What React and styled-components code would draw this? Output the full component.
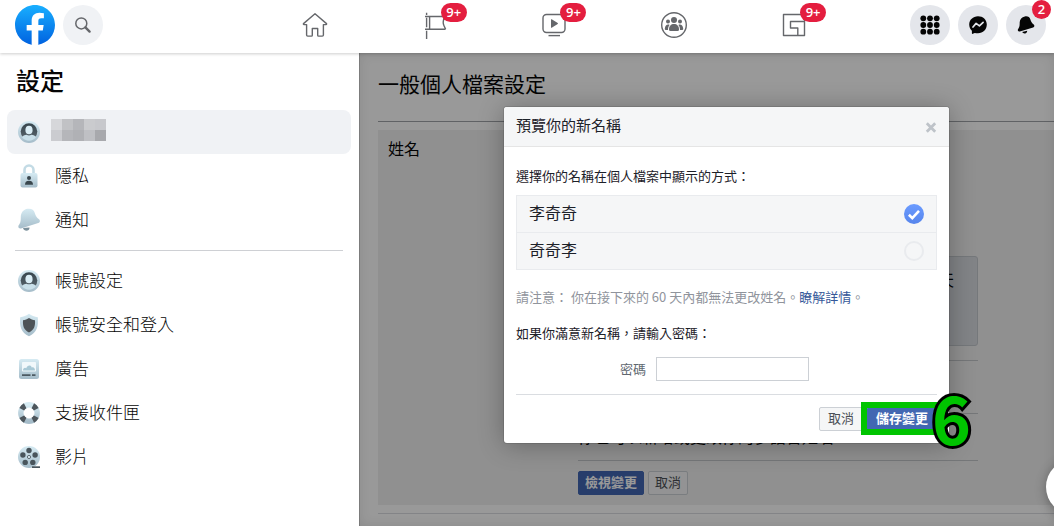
import React from 'react';
import styled, { createGlobalStyle, css } from 'styled-components';

const GlobalStyle = createGlobalStyle`
  *, *::before, *::after { box-sizing: border-box; }
  body {
    margin: 0;
    overflow-x: hidden;
    background: #fff;
    color: #050505;
    font-family: "Noto Sans CJK TC", "Noto Sans", sans-serif;
  }
  h1, h2, h3, p { margin: 0; padding: 0; font-weight: 400; }
  button, input { font-family: inherit; }
  svg { display: block; }
`;

const Page = styled.div`
  position: relative;
  display: flex;
  flex-direction: column;
  min-height: 100vh;
  overflow: hidden;
`;

/* ---------- top bar ---------- */

const TopBar = styled.header`
  position: relative;
  z-index: 3;
  display: flex;
  height: 53px;
  padding: 5px 8px 8px 15px;
  background: #fff;
  box-shadow: 0 1px 3px rgba(0, 0, 0, 0.2);
`;

const BarStart = styled.div`
  display: flex;
  gap: 8px;
  width: 240px;
`;

const BarEnd = styled.div`
  display: flex;
  justify-content: flex-end;
  gap: 8px;
  width: 192px;
`;

const Tabs = styled.nav`
  display: grid;
  grid-template-columns: repeat(5, 1fr);
  flex: 1;
`;

const TabLink = styled.a`
  display: flex;
  align-items: center;
  justify-content: center;
  color: #65676b;
`;

const IconSlot = styled.span`
  position: relative;
  display: block;
`;

const RoundButton = styled.button`
  position: relative;
  display: flex;
  align-items: center;
  justify-content: center;
  width: 40px;
  height: 40px;
  padding: 0;
  border: 0;
  border-radius: 50%;
  background: ${(p) => (p.$soft ? '#f0f2f5' : '#e4e6eb')};
  color: ${(p) => (p.$soft ? '#65676b' : '#050505')};
`;

const Badge = styled.span`
  position: absolute;
  top: -8px;
  left: 20px;
  min-width: 26px;
  height: 19px;
  padding: 0 5px;
  border-radius: 10px;
  background: #e41e3f;
  color: #fff;
  font: 600 13px/19px "Open Sans", "Noto Sans", sans-serif;
  text-align: center;
  ${(p) => p.$corner && css`
    top: -5px;
    left: 26px;
    min-width: 19px;
  `}
`;

/* ---------- side menu ---------- */

const Columns = styled.div`
  display: flex;
  flex: 1;
`;

const SideMenu = styled.aside`
  flex: none;
  width: 359px;
  padding: 9px 8px 0 7px;
`;

const MenuTitle = styled.h1`
  padding: 0 9px;
  margin-bottom: 12px;
  font-size: 24px;
  font-weight: 500;
  line-height: 36px;
`;

const MenuLink = styled.a`
  display: flex;
  align-items: center;
  gap: 11px;
  height: 44px;
  padding: 0 11px;
  border-radius: 8px;
  background: ${(p) => (p.$active ? '#f0f2f5' : 'transparent')};
  color: #050505;
  font-size: 17px;
  font-weight: 300;
  line-height: 24px;
  text-decoration: none;
`;

const MenuText = styled.span`
  padding: 0 0 2px 4px;
`;

const MenuRule = styled.hr`
  height: 1px;
  margin: 8px;
  border: 0;
  background: #ced0d4;
`;

const Mosaic = styled.span`
  display: grid;
  grid-template-columns: repeat(5, 11px);
  grid-auto-rows: 11px;
  margin-bottom: 4px;
`;

const MosaicCell = styled.i`
  background: ${(p) => p.$tone};
`;

/* ---------- settings page ---------- */

const Main = styled.main`
  position: relative;
  flex: 1;
  min-width: 0;
  padding: 15px 0 12px 19px;
`;

const SectionTitle = styled.h2`
  padding-bottom: 23px;
  margin-bottom: 8px;
  border-bottom: 1px solid #a0a3a8;
  font-size: 21px;
  line-height: 30px;
`;

const SettingRow = styled.section`
  display: flex;
  padding: 10px 0 10px 10px;
  background: #f0f0f0;
`;

const RowLabel = styled.h3`
  width: 190px;
  font-size: 16px;
  line-height: 16px;
`;

const RowContent = styled.div`
  flex: 0 1 400px;
  font-size: 16px;
`;

const RowEnd = styled.hr`
  height: 1px;
  margin: 8px 0 0;
  border: 0;
  background: #dadde1;
`;

const NameFields = styled.div`
  display: grid;
  justify-items: start;
  gap: 12px;
  margin-bottom: 20px;
`;

const TextInput = styled.input`
  width: 153px;
  height: 24px;
  padding: 0 4px;
  border: 1px solid #ccd0d5;
  background: #fff;
`;

const Notice = styled.p`
  min-height: 90px;
  padding: 11px 23px;
  margin-bottom: 14px;
  border: 1px solid #c4c8ce;
  border-radius: 3px;
  background: #d9dce1;
  line-height: 22px;
  text-align: right;
`;

const RowPart = styled.div`
  min-height: ${(p) => (p.$tall ? 53 : 47)}px;
  padding: 12px 0;
  border-top: 1px solid #c4c6ca;
  line-height: 20px;
`;

const RowActions = styled.div`
  display: flex;
  gap: 4px;
  padding-top: 10px;
  border-top: 1px solid #c4c6ca;
`;

const Button = styled.button`
  height: 24px;
  padding: 0 ${(p) => (p.$roomy ? 8 : 6)}px 2px;
  border: 1px solid ${(p) => (p.$primary ? '#4267b2' : '#ccd0d5')};
  border-radius: 2px;
  background: ${(p) => (p.$primary ? '#4267b2' : '#f5f6f7')};
  color: ${(p) => (p.$primary ? '#fff' : '#4b4f56')};
  font-size: 13px;
  font-weight: ${(p) => (p.$primary ? 700 : 400)};
  line-height: 20px;
  white-space: nowrap;
`;

/* ---------- dialog ---------- */

const Shade = styled.div`
  position: absolute;
  inset: 0;
  display: flex;
  align-items: flex-start;
  justify-content: center;
  padding: 54px 0 0 40px;
  background: rgba(0, 0, 0, 0.4);
  box-shadow: inset 1px 0 0 rgba(0, 0, 0, 0.15), inset 0 0 12px rgba(0, 0, 0, 0.1);
`;

const Dialog = styled.div`
  width: 445px;
  max-width: 100%;
  border-radius: 3px;
  background: #fff;
  box-shadow: 0 2px 26px rgba(0, 0, 0, 0.3), 0 0 0 1px rgba(0, 0, 0, 0.1);
  color: #1d2129;
  font-size: 13px;
  line-height: 20px;
`;

const DialogHead = styled.div`
  display: flex;
  align-items: center;
  justify-content: space-between;
  height: 40px;
  padding: 0 12px;
  border-bottom: 1px solid #e5e5e5;
  border-radius: 3px 3px 0 0;
  background: #f5f6f7;
`;

const DialogTitle = styled.h2`
  padding-bottom: 3px;
  font-size: 15px;
`;

const CloseButton = styled.button`
  padding: 0;
  border: 0;
  background: none;
  color: #bec3c9;
`;

const DialogBody = styled.div`
  padding: 19px 12px 13px;
`;

const Choices = styled.div`
  margin: 9px 0 17px;
  border: 1px solid #e9ebee;
  background: #f5f6f7;
`;

const Choice = styled.label`
  display: flex;
  align-items: center;
  justify-content: space-between;
  height: 36px;
  padding: 0 12px;
  font-size: 16px;
  & + & {
    height: 37px;
    border-top: 1px solid #e9ebee;
  }
`;

const ChoiceName = styled.span`
  padding-bottom: 4px;
`;

const RadioBox = styled.span`
  display: grid;
  & > * { grid-area: 1 / 1; }
`;

const Radio = styled.input`
  appearance: none;
  width: 20px;
  height: 20px;
  margin: 0;
  border: 2px solid #e9ebee;
  border-radius: 50%;
  &:checked {
    border: 0;
    background: linear-gradient(#6b9bff, #5685ec);
  }
  & + svg { visibility: hidden; }
  &:checked + svg { visibility: visible; }
`;

const Note = styled.p`
  margin-bottom: 16px;
  color: #90949c;
  a {
    color: #365899;
    text-decoration: none;
  }
`;

const PasswordRow = styled.div`
  display: flex;
  align-items: center;
  margin-top: 14px;
  label {
    width: 130px;
    margin-right: 10px;
    color: #606770;
    text-align: right;
  }
`;

const DialogFoot = styled.div`
  display: flex;
  justify-content: flex-end;
  gap: 4px;
  padding: 12px 0;
  margin: 0 12px;
  border-top: 1px solid #dadde1;
`;

const Marked = styled.div`
  position: relative;
`;

const MarkFrame = styled.span`
  position: absolute;
  inset: -5px -6px -4px;
  border: 6px solid #00c400;
  pointer-events: none;
`;

const MarkNumber = styled.span`
  position: absolute;
  top: -19px;
  left: 65px;
  color: #00c400;
  font-size: 66px;
  font-weight: 700;
  line-height: 56px;
  -webkit-text-stroke: 6px #000;
  paint-order: stroke fill;
  pointer-events: none;
`;

const ChatButton = styled.button`
  position: absolute;
  z-index: 4;
  bottom: 11px;
  right: -48px;
  width: 56px;
  height: 56px;
  border: 0;
  border-radius: 50%;
  background: #fff;
  box-shadow: 0 2px 12px rgba(0, 0, 0, 0.3);
`;

/* ---------- icons ---------- */

const line = { fill: 'none', stroke: 'currentColor', strokeWidth: 1.4, strokeLinejoin: 'round' };

const LogoIcon = () => (
  <svg width="40" height="40" viewBox="0 0 36 36">
    <defs>
      <linearGradient id="logo" x1="0" y1="0" x2="0" y2="1">
        <stop offset="0" stopColor="#19afff" />
        <stop offset="1" stopColor="#0062e0" />
      </linearGradient>
    </defs>
    <path fill="url(#logo)" d="M15 35.8C6.5 34.3 0 26.9 0 18 0 8.1 8.1 0 18 0s18 8.1 18 18c0 8.9-6.5 16.3-15 17.8l-1-.8h-4l-1 .8z" />
    <path fill="#fff" d="M25 23l.8-5H21v-3.5c0-1.4.5-2.5 2.7-2.5H26V7.4c-1.3-.2-2.7-.4-4-.4-4.1 0-7 2.5-7 7v4h-4.5v5H15v12.7c1 .2 2 .3 3 .3s2-.1 3-.3V23h4z" />
  </svg>
);

const SearchIcon = () => (
  <svg width="20" height="20" viewBox="0 0 20 20" fill="none" stroke="currentColor">
    <circle cx="8.3" cy="8.4" r="5.5" strokeWidth="1.5" />
    <path d="M12.4 12.4l4.2 4.2" strokeWidth="2.4" strokeLinecap="round" />
  </svg>
);

const HomeIcon = () => (
  <svg width="28" height="28" viewBox="0 0 28 28" {...line}>
    <path d="M14 2.8 2.5 12.6q-.4.9.5 1H5.6V24q0 1.1 1.1 1.1h3.7q.9 0 .9-.9v-6.7h5.4v6.7q0 .9.9.9h3.7q1.1 0 1.1-1.1V13.6H25q.9-.1.5-1z" />
  </svg>
);

const FlagIcon = () => (
  <svg width="28" height="28" viewBox="0 0 28 28" {...line}>
    <path d="M5.6 1.8v2.2M5.6 6.8v9.4M5.6 19.8V28M4 5.5h20.6M4 18.3h20.6M8.6 5.5v12.8M23.5 5.5c-1.3 3.5-1.9 6.5-.6 9 .5 1.1 1.1 2.2 1.7 3.8" />
  </svg>
);

const WatchIcon = () => (
  <svg width="28" height="28" viewBox="0 0 28 28" {...line}>
    <rect x="3" y="3.5" width="22" height="18" rx="3.5" />
    <path d="M8.5 24.6h11.5" />
    <path fill="currentColor" stroke="none" d="M11 8.7v7.6q0 .8.7.4l6-3.7q.6-.5 0-1l-6-3.7q-.7-.4-.7.4z" />
  </svg>
);

const GroupsIcon = () => (
  <svg width="28" height="28" viewBox="0 0 28 28" {...line}>
    <circle cx="14" cy="14" r="12.3" />
    <g fill="currentColor" stroke="none">
      <circle cx="14" cy="8.9" r="3" />
      <circle cx="8" cy="10.6" r="2" />
      <circle cx="20" cy="10.6" r="2" />
      <path d="M9 18.5c0-3.6 2-5.5 5-5.500s5 1.900 5 5.500q0 1.500-1.500 1.500h-7Q9 20 9 18.500z" />
      <path d="M8 19H6q-1.500 0-1.200-1.500c.4-2.600 1.500-4 3.400-4 .6 0 1 .1 1.400.4C8.400 15.300 8 17 8 19zM20 19h2q1.500 0 1.200-1.500c-.4-2.600-1.500-4-3.400-4-.6 0-1 .1-1.400.4C19.600 15.300 20 17 20 19z" />
    </g>
  </svg>
);

const GamingIcon = () => (
  <svg width="28" height="28" viewBox="0 0 28 28" {...line}>
    <path d="M3.5 3.5h21v21h-21zM24.5 10.5h-14v6.5h7.3v7.5" />
  </svg>
);

const AppsIcon = () => (
  <svg width="20" height="20" viewBox="0 0 20 20" fill="currentColor">
    {[3.3, 10, 16.7].map((y) => [3.3, 10, 16.7].map((x) => <circle key={`${x}-${y}`} cx={x} cy={y} r="2.9" />))}
  </svg>
);

const MessengerIcon = () => (
  <svg width="20" height="20" viewBox="0 0 20 20">
    <path fill="currentColor" d="M10 1.2c-5 0-8.800 3.600-8.800 8.300 0 2.600 1 4.700 2.700 6.200v2.600q.1.900.9.500l2-.9c1 .3 2.100.4 3.200.4 5 0 8.800-3.900 8.800-8.800S15 1.200 10 1.200z" />
    <path fill="none" stroke="#e4e6eb" strokeWidth="1.7" strokeLinejoin="round" strokeLinecap="round" d="M5 12l3.1-3.6 3.300 2.500 3.700-3.500" />
  </svg>
);

const bellShape = 'M2.8 8.500C3 4.500 5.500 1.500 9.500.8c3.700-.6 6.300.7 7.200 4 .8 3 2 4.700 4.300 6.500 1.500 1.200 1 3.300-.8 3.800L3 20.500C.4 21-.5 18.300 1.200 16.500c1.800-2.100 1.500-5 1.600-8z';

const BellIcon = () => (
  <svg width="20" height="20" viewBox="-2 -1 26 26" fill="currentColor">
    <path d={bellShape} />
    <path d="M6 21.200l6.500-1.800c.1 1.900-1 3.300-2.800 3.500-1.600.2-2.900-.4-3.700-1.700z" />
  </svg>
);

const Gradients = ({ id }) => (
  <defs>
    <linearGradient id={`${id}-l`} x1="0" y1="0" x2="0" y2="1">
      <stop offset="0" stopColor="#d6ebf3" />
      <stop offset="1" stopColor="#a5bcc9" />
    </linearGradient>
    <linearGradient id={`${id}-d`} x1="0" y1="0" x2="0" y2="1">
      <stop offset="0" stopColor="#36454d" />
      <stop offset="1" stopColor="#5a666e" />
    </linearGradient>
  </defs>
);

const MenuSvg = ({ id, children }) => (
  <svg width="22" height="24" viewBox="0 0 22 24">
    <Gradients id={id} />
    {children}
  </svg>
);

const PersonIcon = ({ id }) => (
  <MenuSvg id={id}>
    <circle cx="11" cy="12" r="11" fill={`url(#${id}-l)`} />
    <circle cx="11" cy="11.5" r="8.3" fill={`url(#${id}-d)`} />
    <path fill="#c9e0ea" d="M4 17.300c.6-1.800 2.600-2.300 4.600-2.600 1.500.9 3.300.9 4.800 0 2 .3 4 .8 4.600 2.600-3.500 4.500-10.500 4.500-14 0z" />
    <ellipse cx="11" cy="10" rx="3.6" ry="4.3" fill="#d9edf5" />
  </MenuSvg>
);

const LockIcon = ({ id }) => (
  <MenuSvg id={id}>
    <path fill="none" stroke="#c3dbe5" strokeWidth="2.6" d="M6.500 11V6a4.500 4.500 0 0 1 9 0v5" />
    <rect x="2.5" y="9" width="17" height="14.5" rx="2" fill={`url(#${id}-l)`} />
    <circle cx="11" cy="14" r="2" fill="#39464d" />
    <path fill="#39464d" d="M7 20.800c0-2.900 1.200-4 4-4s4 1.100 4 4z" />
  </MenuSvg>
);

const NoticeBellIcon = ({ id }) => (
  <MenuSvg id={id}>
    <path fill="#7c919c" d="M5 20l6.500-.6c.3 4-5.500 4.600-6.500.6z" />
    <path fill={`url(#${id}-l)`} d={bellShape} />
  </MenuSvg>
);

const ShieldIcon = ({ id }) => (
  <MenuSvg id={id}>
    <path fill={`url(#${id}-l)`} d="M11 .8c2.500 2 5.500 3 8.800 3.400.8 9-.8 15.300-8.800 19C3 19.500 1.400 13.200 2.200 4.200 5.500 3.800 8.500 2.800 11 .8z" />
    <path fill="#4d5357" d="M11 5c1.800 1.300 3.800 2 6 2.300.4 6-.9 9.700-6 12.200-5.100-2.500-6.400-6.200-6-12.200C7.200 7 9.200 6.300 11 5z" />
  </MenuSvg>
);

const AdsIcon = ({ id }) => (
  <MenuSvg id={id}>
    <rect x="1" y="2" width="20" height="20" rx="2.5" fill={`url(#${id}-l)`} />
    <rect x="4" y="5" width="14" height="9.5" rx=".8" fill="#f1f8fb" />
    <path fill="#a9c9d6" d="M5 13.500c0-2.500 2-3.500 3.300-2.200C9 8 13 7.400 13.700 10.400c2-.9 3.300.9 3.300 3.100z" />
    <path fill="#4c5a62" d="M4 17.200h8.500v1.800H4zM14 17.200h3.500v1.800H14z" />
  </MenuSvg>
);

const SupportIcon = ({ id }) => (
  <MenuSvg id={id}>
    <circle cx="11" cy="12" r="8.2" fill="none" stroke={`url(#${id}-l)`} strokeWidth="5.4" />
    <circle cx="11" cy="12" r="8.2" fill="none" stroke="#4d565c" strokeWidth="5.4" pathLength="360" strokeDasharray="34 56" strokeDashoffset="-28" />
  </MenuSvg>
);

const ReelIcon = ({ id }) => (
  <MenuSvg id={id}>
    <circle cx="11" cy="12" r="11" fill={`url(#${id}-l)`} />
    <g fill="#49555c">
      <circle cx="11" cy="5.5" r="2.7" />
      <circle cx="4.9" cy="10" r="2.7" />
      <circle cx="17.1" cy="10" r="2.7" />
      <circle cx="7.2" cy="17.4" r="2.7" />
      <circle cx="14.8" cy="17.4" r="2.7" />
      <path d="M14 21.300h8v1.700h-8z" />
    </g>
    <circle cx="11" cy="12" r="1.6" fill="#dcecf3" stroke="#5f6c74" />
  </MenuSvg>
);

const CheckIcon = () => (
  <svg width="20" height="20" viewBox="0 0 20 20" fill="none" stroke="#fff" strokeWidth="2.6">
    <path d="M4.9 10.8l3.4 3.3 6.7-7.3" />
  </svg>
);

const CloseIcon = () => (
  <svg width="12" height="12" viewBox="0 0 12 12" fill="none" stroke="currentColor" strokeWidth="2.8">
    <path d="M1.8 2.3l8.4 8.4M10.2 2.3l-8.4 8.4" />
  </svg>
);

/* ---------- data ---------- */

const tabs = [
  { label: '首頁', Icon: HomeIcon },
  { label: '粉絲專頁', Icon: FlagIcon, badge: '9+' },
  { label: 'Watch', Icon: WatchIcon, badge: '9+' },
  { label: '社團', Icon: GroupsIcon },
  { label: '遊戲', Icon: GamingIcon, badge: '9+' },
];

const privacyLinks = [
  { label: '隱私', Icon: LockIcon },
  { label: '通知', Icon: NoticeBellIcon },
];

const accountLinks = [
  { label: '帳號設定', Icon: PersonIcon },
  { label: '帳號安全和登入', Icon: ShieldIcon },
  { label: '廣告', Icon: AdsIcon },
  { label: '支援收件匣', Icon: SupportIcon },
  { label: '影片', Icon: ReelIcon },
];

const mosaicTones = [
  '#d6d7da', '#c1c2c5', '#b5b6ba', '#cacbce', '#c7c8cc',
  '#cbccd0', '#b5b6ba', '#b0b1b5', '#bfc0c4', '#a8a9ad',
];

const MenuList = ({ items, prefix }) =>
  items.map(({ label, Icon }, i) => (
    <MenuLink href="#" key={label}>
      <Icon id={`${prefix}${i}`} />
      <MenuText>{label}</MenuText>
    </MenuLink>
  ));

export default function App() {
  return (
    <Page>
      <GlobalStyle />
      <TopBar>
        <BarStart>
          <a href="#" aria-label="Facebook"><LogoIcon /></a>
          <RoundButton $soft aria-label="搜尋"><SearchIcon /></RoundButton>
        </BarStart>
        <Tabs>
          {tabs.map(({ label, Icon, badge }) => (
            <TabLink href="#" key={label} aria-label={label}>
              <IconSlot>
                <Icon />
                {badge && <Badge>{badge}</Badge>}
              </IconSlot>
            </TabLink>
          ))}
        </Tabs>
        <BarEnd>
          <RoundButton aria-label="功能表"><AppsIcon /></RoundButton>
          <RoundButton aria-label="Messenger"><MessengerIcon /></RoundButton>
          <RoundButton aria-label="通知">
            <BellIcon />
            <Badge $corner>2</Badge>
          </RoundButton>
        </BarEnd>
      </TopBar>

      <Columns>
        <SideMenu>
          <MenuTitle>設定</MenuTitle>
          <nav>
            <MenuLink href="#" $active aria-label="一般">
              <PersonIcon id="me" />
              <Mosaic>
                {mosaicTones.map((tone, i) => <MosaicCell key={i} $tone={tone} />)}
              </Mosaic>
            </MenuLink>
            <MenuList items={privacyLinks} prefix="p" />
            <MenuRule />
            <MenuList items={accountLinks} prefix="a" />
          </nav>
        </SideMenu>

        <Main>
          <SectionTitle>一般個人檔案設定</SectionTitle>
          <SettingRow>
            <RowLabel>姓名</RowLabel>
            <RowContent>
              <NameFields>
                <TextInput type="text" aria-label="姓氏" />
                <TextInput type="text" aria-label="中間名" />
                <TextInput type="text" aria-label="名字" />
              </NameFields>
              <Notice>接下來的 60 天</Notice>
              <RowPart $tall />
              <RowPart>你也可以新增或更改你的多語言姓名</RowPart>
              <RowActions>
                <Button $primary>檢視變更</Button>
                <Button>取消</Button>
              </RowActions>
            </RowContent>
          </SettingRow>
          <RowEnd />

          <Shade>
            <Dialog role="dialog" aria-labelledby="dialog-title">
              <DialogHead>
                <DialogTitle id="dialog-title">預覽你的新名稱</DialogTitle>
                <CloseButton aria-label="關閉"><CloseIcon /></CloseButton>
              </DialogHead>
              <DialogBody>
                <p>選擇你的名稱在個人檔案中顯示的方式：</p>
                <Choices>
                  {['李奇奇', '奇奇李'].map((name, i) => (
                    <Choice key={name}>
                      <ChoiceName>{name}</ChoiceName>
                      <RadioBox>
                        <Radio type="radio" name="display-name" defaultChecked={i === 0} />
                        <CheckIcon />
                      </RadioBox>
                    </Choice>
                  ))}
                </Choices>
                <Note>請注意： 你在接下來的 60 天內都無法更改姓名。<a href="#">瞭解詳情</a>。</Note>
                <p>如果你滿意新名稱，請輸入密碼：</p>
                <PasswordRow>
                  <label htmlFor="password">密碼</label>
                  <TextInput id="password" type="password" />
                </PasswordRow>
              </DialogBody>
              <DialogFoot>
                <Button $roomy>取消</Button>
                <Marked>
                  <Button $primary $roomy>儲存變更</Button>
                  <MarkFrame />
                  <MarkNumber>6</MarkNumber>
                </Marked>
              </DialogFoot>
            </Dialog>
          </Shade>
        </Main>
      </Columns>
      <ChatButton aria-label="新訊息" />
    </Page>
  );
}
